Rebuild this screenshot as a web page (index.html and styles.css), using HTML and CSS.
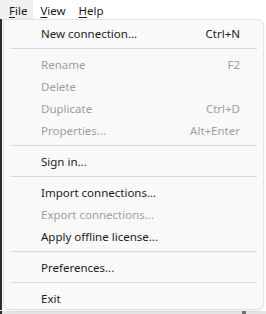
FILE: index.html
```html
<!DOCTYPE html>
<html lang="en">
<head>
  <meta charset="UTF-8" />
  <meta name="viewport" content="width=device-width, initial-scale=1.0" />
  <title>File menu</title>
  <link rel="stylesheet" href="styles.css">
</head>
<body>
  <div class="menubar">
    <div class="bar-item active"><u>F</u>ile</div>
    <div class="bar-item"><u>V</u>iew</div>
    <div class="bar-item"><u>H</u>elp</div>
  </div>

  <div class="stage">
    <div class="menu">
      <div class="item"><span>New connection...</span><span class="key">Ctrl+N</span></div>
      <div class="sep"></div>
      <div class="item disabled"><span>Rename</span><span class="key">F2</span></div>
      <div class="item disabled"><span>Delete</span></div>
      <div class="item disabled"><span>Duplicate</span><span class="key">Ctrl+D</span></div>
      <div class="item disabled"><span>Properties...</span><span class="key">Alt+Enter</span></div>
      <div class="sep"></div>
      <div class="item"><span>Sign in...</span></div>
      <div class="sep"></div>
      <div class="item"><span>Import connections...</span></div>
      <div class="item disabled"><span>Export connections...</span></div>
      <div class="item"><span>Apply offline license...</span></div>
      <div class="sep"></div>
      <div class="item"><span>Preferences...</span></div>
      <div class="sep"></div>
      <div class="item"><span>Exit</span></div>
    </div>
  </div>

  <div class="strip"><div class="thumb"></div></div>
</body>
</html>
```

FILE: styles.css
```css
:root {
  --font: 'Segoe UI', 'Noto Sans', sans-serif;
  --text: #1b1b1b;
  --muted: #9e9e9e;
  --menu-bg: #f9f9f9;
  --line: #d9d9d9;
}
* {
  box-sizing: border-box;
}
body {
  margin: 0;
  font-family: var(--font);
  font-size: 11.5px;
  color: var(--text);
  background: #ffffff;
}
.menubar {
  display: flex;
  height: 19px;
}
.bar-item {
  display: flex;
  align-items: center;
  height: 19px;
  padding: 2px 6px 0 7px;
}
.bar-item.active {
  padding-left: 9px;
  background: #f0f0f0;
}
.bar-item u {
  text-underline-offset: 2px;
}
.stage {
  display: flex;
  border-left: 2px solid #2b2b2b;
  padding-left: 1px;
  padding-right: 2px;
}
.menu {
  flex: 1;
  background: var(--menu-bg);
  border: 1px solid #e3e3e3;
  border-radius: 0 7px 7px 7px;
  padding: 2px 0 0 0;
  box-shadow: 0 1px 3px rgba(0, 0, 0, 0.08);
}
.item {
  display: flex;
  justify-content: space-between;
  align-items: center;
  height: 22px;
  padding: 0 23px 0 37px;
}
.item.disabled {
  color: var(--muted);
}
.sep {
  height: 1px;
  margin: 4px 6px 4px 7px;
  background: var(--line);
}
.strip {
  height: 4px;
  background: #e4e4e4;
  border-left: 2px solid #2b2b2b;
}
.thumb {
  width: 4px;
  height: 4px;
  margin-left: 240px;
  margin-top: 1px;
  background: #707070;
}
```
